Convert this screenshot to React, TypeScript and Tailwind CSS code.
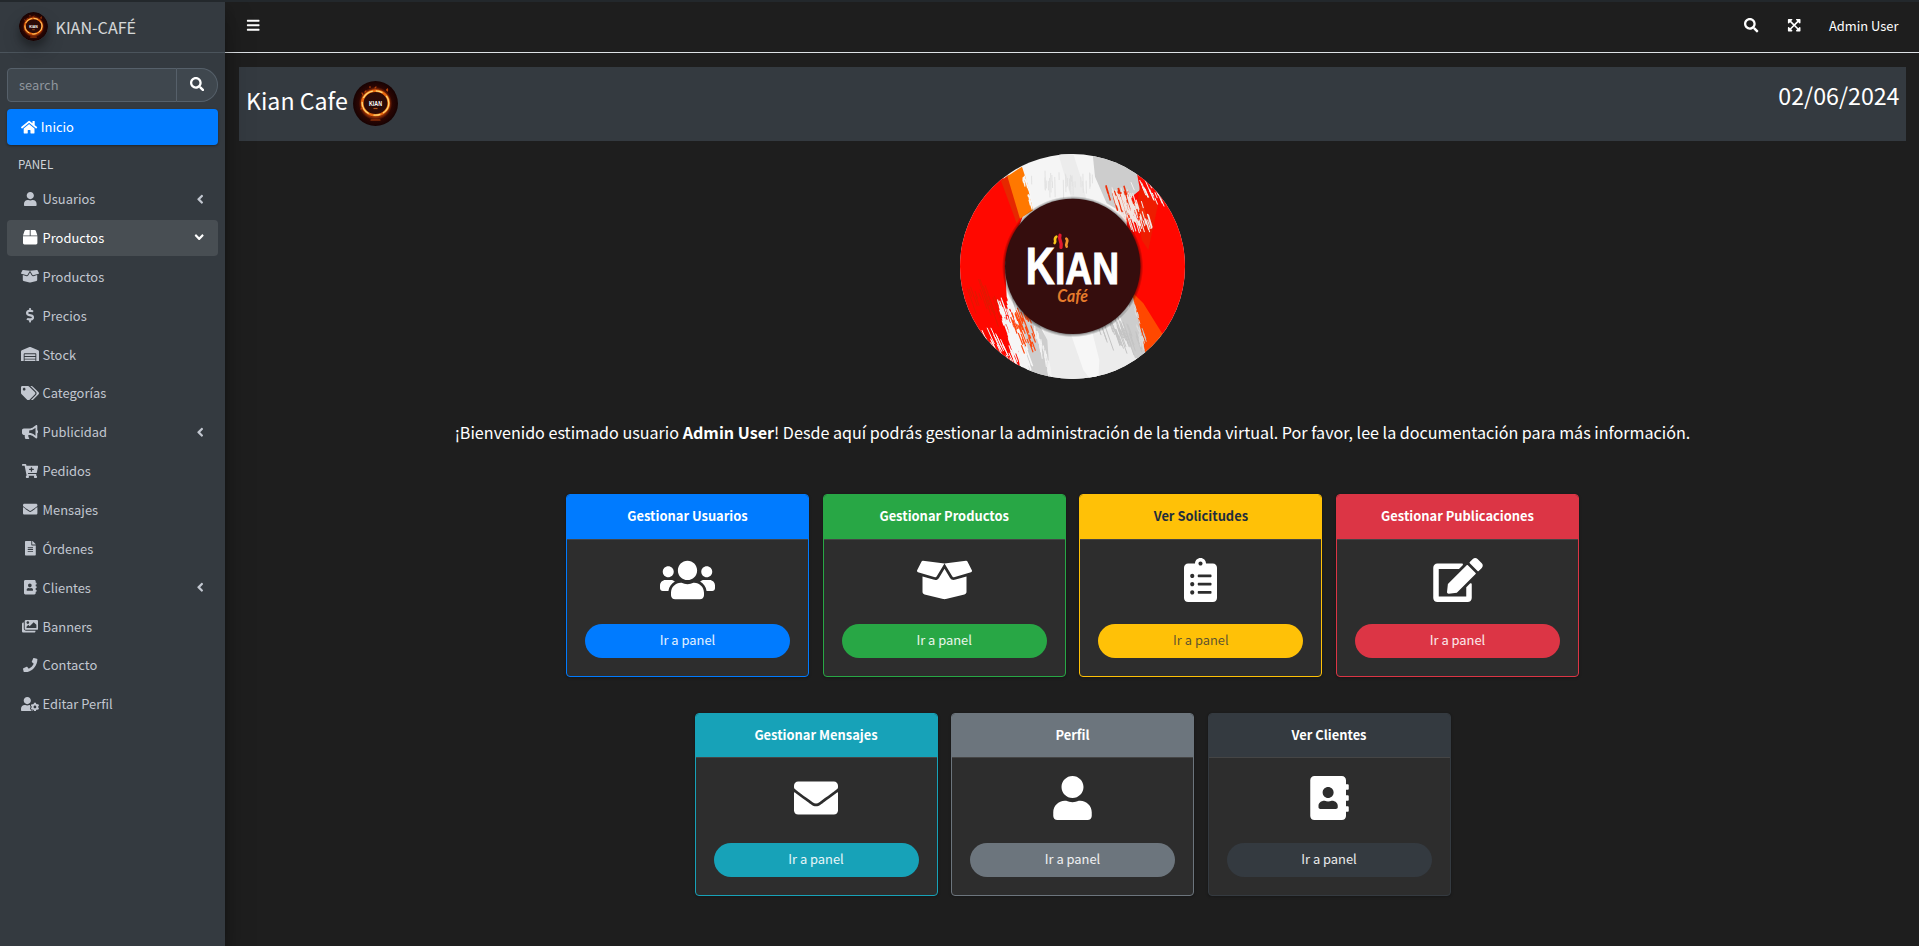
import React from "react";
import type { IconType } from "react-icons";
import {
  FaAddressBook, FaAngleDown, FaAngleLeft, FaBars, FaBox, FaBoxOpen, FaBullhorn, FaCartPlus,
  FaClipboardList, FaDollarSign, FaEdit, FaEnvelope, FaExpandArrowsAlt, FaFileAlt, FaHome,
  FaImages, FaPhone, FaSearch, FaTags, FaUser, FaUserCog, FaUsers, FaWarehouse,
} from "react-icons/fa";

type MenuItem = { label: string; icon: IconType; size: string; state?: "closed" | "open" };

const menu: MenuItem[] = [
  { label: "Usuarios", icon: FaUser, size: "w-[12.6px]", state: "closed" },
  { label: "Productos", icon: FaBox, size: "w-[14.4px]", state: "open" },
  { label: "Productos", icon: FaBoxOpen, size: "w-[18px]" },
  { label: "Precios", icon: FaDollarSign, size: "w-[8.1px]" },
  { label: "Stock", icon: FaWarehouse, size: "w-[18px]" },
  { label: "Categorías", icon: FaTags, size: "w-[18px]" },
  { label: "Publicidad", icon: FaBullhorn, size: "w-[16.2px]", state: "closed" },
  { label: "Pedidos", icon: FaCartPlus, size: "w-[16.2px]" },
  { label: "Mensajes", icon: FaEnvelope, size: "w-[14.4px]" },
  { label: "Órdenes", icon: FaFileAlt, size: "w-[10.8px]" },
  { label: "Clientes", icon: FaAddressBook, size: "w-[12.6px]", state: "closed" },
  { label: "Banners", icon: FaImages, size: "w-[16.2px]" },
  { label: "Contacto", icon: FaPhone, size: "w-[14.4px]" },
  { label: "Editar Perfil", icon: FaUserCog, size: "w-[18px]" },
];

type Panel = { title: string; icon: IconType; size: string; border: string; bg: string; head: string; link: string };

const topPanels: Panel[] = [
  { title: "Gestionar Usuarios", icon: FaUsers, size: "w-[55px]", border: "border-[#007bff]", bg: "bg-[#007bff]", head: "text-white", link: "text-white/90" },
  { title: "Gestionar Productos", icon: FaBoxOpen, size: "w-[55px]", border: "border-[#28a745]", bg: "bg-[#28a745]", head: "text-white", link: "text-white/90" },
  { title: "Ver Solicitudes", icon: FaClipboardList, size: "w-[33px]", border: "border-[#ffc107]", bg: "bg-[#ffc107]", head: "text-[#1f2d3d]", link: "text-[#1f2d3d]/75" },
  { title: "Gestionar Publicaciones", icon: FaEdit, size: "w-[50px]", border: "border-[#dc3545]", bg: "bg-[#dc3545]", head: "text-white", link: "text-white/90" },
];

const bottomPanels: Panel[] = [
  { title: "Gestionar Mensajes", icon: FaEnvelope, size: "w-[44px]", border: "border-[#17a2b8]", bg: "bg-[#17a2b8]", head: "text-white", link: "text-white/90" },
  { title: "Perfil", icon: FaUser, size: "w-[39px]", border: "border-[#6c757d]", bg: "bg-[#6c757d]", head: "text-white", link: "text-white/90" },
  { title: "Ver Clientes", icon: FaAddressBook, size: "w-[39px]", border: "border-[#343a40]", bg: "bg-[#343a40]", head: "text-white", link: "text-white/90" },
];

function FireLogo({ className }: { className: string }) {
  return (
    <svg viewBox="0 0 45 45" className={className}>
      <defs>
        <radialGradient id="ember">
          <stop offset="0" stopColor="#2a0a08" />
          <stop offset="0.5" stopColor="#2d0b07" />
          <stop offset="0.62" stopColor="#8a2a05" />
          <stop offset="0.74" stopColor="#2c0603" />
          <stop offset="1" stopColor="#170202" />
        </radialGradient>
      </defs>
      <circle cx="22.5" cy="22.5" r="22.5" fill="url(#ember)" />
      <ellipse cx="22.5" cy="22" rx="13.3" ry="12.2" fill="none" stroke="#ea6a10" strokeWidth="2.6" />
      <ellipse cx="22.5" cy="22" rx="13.3" ry="12.2" fill="none" stroke="#ffd873" strokeWidth="1.3" strokeDasharray="12 3 7 5 14 4" />
      <path d="M10 14l-1-2M33.5 9l1-1M17 5.5v1M22 7l1-1M34.5 8v2M12 11l1-1M18 39h9M9 27l-1 1" stroke="#b5420a" strokeWidth="1.2" strokeLinecap="round" />
      <text x="22.5" y="25" textAnchor="middle" fontSize="6.8" fontWeight="700" fontFamily="Liberation Sans, sans-serif" fill="#fff" textLength="13" lengthAdjust="spacingAndGlyphs">KIAN</text>
      <path d="M20.5 27.5h4" stroke="#b5561c" strokeWidth="1.2" />
    </svg>
  );
}

function streaks(count: number, seed: number, ax: number, ay: number, bx: number, by: number, spread: number, slope: number, len: number) {
  let s = seed;
  const rnd = () => {
    s = (s * 16807) % 2147483647;
    return s / 2147483647;
  };
  let d = "";
  for (let i = 0; i < count; i++) {
    const t = rnd();
    const x = ax + (bx - ax) * t + (rnd() - 0.5) * spread;
    const y = ay + (by - ay) * t + (rnd() - 0.5) * spread * 0.6;
    const l = len * (0.3 + rnd());
    d += `M${x.toFixed(1)} ${y.toFixed(1)}l${(l * slope).toFixed(1)} ${l.toFixed(1)}`;
  }
  return d;
}

const redOnGrey = streaks(60, 77, 520, 150, 590, 210, 60, 0.3, 34);
const whiteOnRed = streaks(90, 1234, 530, 150, 605, 240, 70, 0.3, 40);
const whiteOnRedFar = streaks(18, 99, 590, 120, 655, 165, 36, 0.42, 34);
const whiteLow = streaks(110, 4242, 195, 480, 240, 640, 50, 0.36, 46);
const whiteLowFar = streaks(26, 313, 140, 570, 215, 660, 44, 0.45, 40);
const redLow = streaks(46, 909, 225, 500, 275, 620, 50, 0.38, 32);
const greyLow = streaks(44, 555, 500, 540, 585, 580, 70, 0.35, 60);
const whiteEdge = streaks(40, 155, 285, 560, 330, 690, 12, 0.15, 30);
const topFaint = streaks(30, 31, 300, 110, 450, 110, 60, 0.02, 50);
const orangeEdge = streaks(26, 65, 252, 110, 276, 200, 12, 0.25, 16);
const redFaint = streaks(18, 17, 100, 430, 180, 520, 70, 0.35, 70);
const lowOrangeEdge = streaks(26, 651, 582, 490, 606, 610, 12, 0.3, 20);

function KianLogo() {
  return (
    <svg viewBox="60 42 675 675" className="size-[225px]">
      <defs>
        <clipPath id="disc"><circle cx="397.5" cy="379.5" r="337.5" /></clipPath>
        <radialGradient id="rim">
          <stop offset="0.94" stopColor="#000" stopOpacity="0.6" />
          <stop offset="1" stopColor="#000" stopOpacity="0" />
        </radialGradient>
      </defs>
      <g clipPath="url(#disc)" fill="none">
        <path fill="#f5f5f5" d="M60 42h675v675H60z" />
        <path fill="#ececec" d="M355 42L395 180H440L425 120L400 42ZM310 560L335 717H620L560 540Z" />
        <path fill="#f7f7f7" d="M385 560L430 690L450 717H475L478 660L455 570Z" />
        <path fill="#cdcdcd" d="M458 42L465 110L500 190L620 260L600 60ZM215 470L275 717H330L322 600L290 540ZM540 530L585 655L620 650L590 480Z" />
        <path stroke="#e2e2e2" strokeWidth="3" d={topFaint} />
        <path fill="#ff0800" d="M60 42L195 118L250 225L195 370L200 470L230 560L240 690L60 717Z" />
        <path fill="#e62800" d="M183 122L205 105L250 215L230 250Z" />
        <path fill="#ff7800" d="M202 109L246 80L262 130L280 210L240 236Z" />
        <path stroke="#f7f7f7" strokeWidth="4" d={orangeEdge} />
        <path fill="#ff0800" d="M590 95L735 180V600L665 583L560 440V240L575 170L600 150Z" />
        <path fill="#ee1c00" d="M600 140L655 190L625 330L605 300L590 200Z" />
        <path fill="#cdcdcd" d="M560 440L582 465L617 645L580 600Z" />
        <path fill="#ff4800" d="M575 455L610 490L668 583L617 645L600 560Z" />
        <path stroke="#f0300a" strokeWidth="4.5" d={redOnGrey} />
        <path stroke="#f1e6e2" strokeWidth="3.2" d={whiteOnRed} />
        <path stroke="#f4f0ee" strokeWidth="3" d={whiteOnRedFar} />
        <path stroke="#e01a00" strokeWidth="3" d={redFaint} />
        <path stroke="#f6f6f6" strokeWidth="3.4" d={whiteLow} />
        <path stroke="#f6f6f6" strokeWidth="3" d={whiteLowFar} />
        <path stroke="#ff4a10" strokeWidth="3.4" d={redLow} />
        <path stroke="#f2f2f2" strokeWidth="3" d={whiteEdge} />
        <path stroke="#c4c4c4" strokeWidth="3" d={greyLow} />
        <path stroke="#dcdcdc" strokeWidth="3" d={lowOrangeEdge} />
      </g>
      <circle cx="398" cy="380" r="212" fill="url(#rim)" />
      <circle cx="398" cy="379" r="203" fill="#350d0d" />
      <g fill="none" strokeLinecap="round">
        <path stroke="#f5c518" strokeWidth="8" d="M349 290c-10 8 1 12-5 19" />
        <path stroke="#e3172d" strokeWidth="10" d="M360 286c-6 16 8 18 3 36" />
        <path stroke="#f0932b" strokeWidth="8" d="M379 296c9 8-5 14 1 24" />
      </g>
      <g fill="#fff" stroke="#fff" strokeWidth="3" fontFamily="Liberation Sans, Arial, sans-serif" fontWeight="700">
        <text x="257" y="431" fontSize="157" textLength="87" lengthAdjust="spacingAndGlyphs">K</text>
        <text x="345" y="431" fontSize="135" textLength="192" lengthAdjust="spacingAndGlyphs">IAN</text>
      </g>
      <text x="352" y="485" fontSize="50" fontStyle="italic" fontWeight="700" fontFamily="Lato, sans-serif" fill="#e57b2c" textLength="92" lengthAdjust="spacingAndGlyphs">Café</text>
    </svg>
  );
}

function PanelCard({ panel, headClass, linkClass }: { panel: Panel; headClass: string; linkClass: string }) {
  const Icon = panel.icon;
  return (
    <div className={`flex h-[183px] w-[243px] flex-col overflow-hidden rounded-[4px] border bg-[#2d2d2d] shadow-[0_0_1px_rgba(0,0,0,.13),0_1px_3px_rgba(0,0,0,.2)] ${panel.border}`}>
      <div className={`border-b border-b-[#454545] text-center text-[12.9px] font-bold ${headClass} ${panel.bg} ${panel.head}`}>{panel.title}</div>
      <div className="flex flex-col items-center px-[18px] pt-[18px]">
        <Icon className={`h-[44px] text-white ${panel.size}`} />
        <a className={`block h-[34px] w-full rounded-full text-center text-[12.9px] leading-[32px] ${linkClass} ${panel.bg} ${panel.link}`}>Ir a panel</a>
      </div>
    </div>
  );
}

export default function App() {
  return (
    <div className="flex h-[946px] w-full overflow-hidden border-t-2 border-[#23282c] bg-[#1e1e1e] font-['Noto_Sans_CJK_JP','Noto_Sans_CJK_SC',sans-serif] text-[12.9px]">
      <aside className="relative z-10 w-[225px] shrink-0 bg-[#343a40] text-[#c2c7d0] shadow-[0_14px_28px_rgba(0,0,0,.25),0_10px_10px_rgba(0,0,0,.22)]">
        <div className="flex h-[51px] items-center border-b border-[#4b545c] pl-[19px]">
          <FireLogo className="mb-[2px] size-[29px] rounded-full shadow-[0_9px_18px_rgba(0,0,0,.19),0_6px_6px_rgba(0,0,0,.23)]" />
          <span className="ml-[7.5px] text-[16.1px] leading-[27px] text-white/80">KIAN-CAFÉ</span>
        </div>
        <div className="flex flex-col px-[7px] pt-[15px]">
          <div className="flex h-[34px] w-[211px]">
            <div className="flex h-full w-[170px] items-center rounded-l-[4px] border border-[#56606a] bg-[#3f474e] pl-[11px] text-[#8f969d]">search</div>
            <div className="flex h-full w-[41px] items-center justify-center rounded-r-full border border-l-0 border-[#56606a] bg-[#3f474e] pb-[2px]">
              <FaSearch className="size-[14.4px] text-white" />
            </div>
          </div>
          <div className="mt-[7px] flex h-[36px] items-center rounded-[4px] bg-[#007bff] pl-[14.4px] text-white shadow-[0_1px_3px_rgba(0,0,0,.12),0_1px_2px_rgba(0,0,0,.24)]">
            <FaHome className="h-[14.4px] w-[16.2px]" />
            <span className="ml-[3.2px]">Inicio</span>
          </div>
          <div className="mt-[10px] h-[25.8px] pl-[11px] text-[11.6px] leading-[19px] text-[#d0d4db]">PANEL</div>
          <nav className="flex flex-col gap-[2.86px]">
            {menu.map((item, i) => {
              const Icon = item.icon;
              const open = item.state === "open";
              return (
                <div key={i} className={`flex h-[36px] items-center rounded-[4px] pl-[14.4px] ${open ? "bg-white/10 pr-[12px] text-white" : "pr-[11px]"}`}>
                  <span className="flex w-[18px] justify-center"><Icon className={`h-[14.4px] max-w-none shrink-0 ${item.size}`} /></span>
                  <span className="ml-[3.2px] grow">{item.label}</span>
                  {item.state === "closed" && <FaAngleLeft className="size-[14.4px]" />}
                  {open && <FaAngleDown className="size-[14.4px]" />}
                </div>
              );
            })}
          </nav>
        </div>
      </aside>

      <main className="flex min-w-0 grow flex-col text-white">
        <header className="flex h-[51px] shrink-0 items-center border-b border-[#dee2e6] pr-[20.5px] pb-[3px] pl-[20.5px]">
          <FaBars className="size-[14.4px]" />
          <div className="ml-auto flex items-center">
            <FaSearch className="size-[14.4px]" />
            <FaExpandArrowsAlt className="ml-[28px] size-[14.4px]" />
            <span className="ml-[28px]">Admin User</span>
          </div>
        </header>
        <div className="flex flex-col items-center pt-[14px] pr-[13px] pl-[14px]">
          <div className="flex h-[74px] w-full justify-between bg-[#343a40] pr-[6.5px] pl-[7px] text-[23.2px]">
            <div className="flex h-[73px] items-center">
              <span className="pb-[7px]">Kian Cafe</span>
              <FireLogo className="ml-[5px] size-[45px]" />
            </div>
            <span className="pt-[13px] leading-[31px]">02/06/2024</span>
          </div>
          <div className="mt-[13px]"><KianLogo /></div>
          <p className="mt-[40px] text-[16.11px] leading-[27px] whitespace-nowrap">
            ¡Bienvenido estimado usuario <b className="font-bold">Admin User</b>! Desde aquí podrás gestionar la administración de la tienda virtual. Por favor, lee la documentación para más información.
          </p>
          <div className="mt-[48px] flex gap-[13.7px]">
            {topPanels.map((p) => <PanelCard key={p.title} panel={p} headClass="h-[45px] leading-[42px]" linkClass="mt-[22px]" />)}
          </div>
          <div className="mt-[36px] flex gap-[13.5px]">
            {bottomPanels.map((p) => <PanelCard key={p.title} panel={p} headClass="h-[44px] leading-[42px]" linkClass="mt-[23px]" />)}
          </div>
        </div>
      </main>
    </div>
  );
}
